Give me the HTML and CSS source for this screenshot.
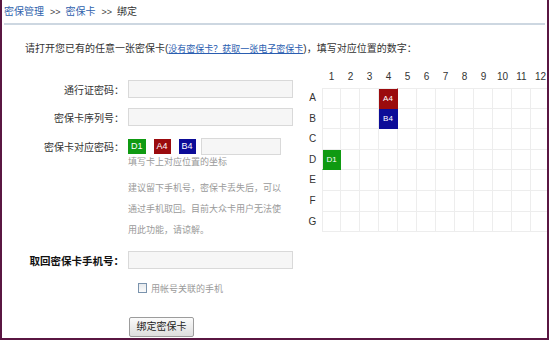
FILE: index.html
```html
<!DOCTYPE html>
<html lang="zh-CN">
<head>
<meta charset="utf-8">
<title>绑定密保卡</title>
<link rel="stylesheet" href="styles.css">
</head>
<body>
<div class="frame">
  <div class="crumb"><a class="lnk">密保管理</a><span class="sep">&gt;&gt;</span><a class="lnk">密保卡</a><span class="sep">&gt;&gt;</span><span class="cur">绑定</span></div>
  <p class="intro">请打开您已有的任意一张密保卡(<a class="sublink">没有密保卡？获取一张电子密保卡</a>)，填写对应位置的数字：</p>
  <div class="content">
    <div class="form">
      <div class="row r1"><span class="lbl">通行证密码：</span><span class="field"></span></div>
      <div class="row r2"><span class="lbl">密保卡序列号：</span><span class="field"></span></div>
      <div class="row r3"><span class="lbl">密保卡对应密码：</span><span class="tok g">D1</span><span class="tok r">A4</span><span class="tok b">B4</span><span class="field short"></span></div>
      <p class="hint">填写卡上对应位置的坐标</p>
      <p class="advice">建议留下手机号，密保卡丢失后，可以<br>通过手机取回。目前大众卡用户无法使<br>用此功能，请谅解。</p>
      <div class="row r4"><span class="lbl strong">取回密保卡手机号：</span><span class="field"></span></div>
      <div class="check"><span class="box"></span><span class="check-text">用帐号关联的手机</span></div>
      <div class="actions"><span class="btn">绑定密保卡</span></div>
    </div>
    <div class="card">
      <span class="hd"></span><span class="hd">1</span><span class="hd">2</span><span class="hd">3</span><span class="hd">4</span><span class="hd">5</span><span class="hd">6</span><span class="hd">7</span><span class="hd">8</span><span class="hd">9</span><span class="hd">10</span><span class="hd">11</span><span class="hd">12</span>
      <span class="rl">A</span><span class="c"></span><span class="c"></span><span class="c"></span><span class="c r">A4</span><span class="c"></span><span class="c"></span><span class="c"></span><span class="c"></span><span class="c"></span><span class="c"></span><span class="c"></span><span class="c"></span>
      <span class="rl">B</span><span class="c"></span><span class="c"></span><span class="c"></span><span class="c b">B4</span><span class="c"></span><span class="c"></span><span class="c"></span><span class="c"></span><span class="c"></span><span class="c"></span><span class="c"></span><span class="c"></span>
      <span class="rl">C</span><span class="c"></span><span class="c"></span><span class="c"></span><span class="c"></span><span class="c"></span><span class="c"></span><span class="c"></span><span class="c"></span><span class="c"></span><span class="c"></span><span class="c"></span><span class="c"></span>
      <span class="rl">D</span><span class="c g">D1</span><span class="c"></span><span class="c"></span><span class="c"></span><span class="c"></span><span class="c"></span><span class="c"></span><span class="c"></span><span class="c"></span><span class="c"></span><span class="c"></span><span class="c"></span>
      <span class="rl">E</span><span class="c"></span><span class="c"></span><span class="c"></span><span class="c"></span><span class="c"></span><span class="c"></span><span class="c"></span><span class="c"></span><span class="c"></span><span class="c"></span><span class="c"></span><span class="c"></span>
      <span class="rl">F</span><span class="c"></span><span class="c"></span><span class="c"></span><span class="c"></span><span class="c"></span><span class="c"></span><span class="c"></span><span class="c"></span><span class="c"></span><span class="c"></span><span class="c"></span><span class="c"></span>
      <span class="rl">G</span><span class="c"></span><span class="c"></span><span class="c"></span><span class="c"></span><span class="c"></span><span class="c"></span><span class="c"></span><span class="c"></span><span class="c"></span><span class="c"></span><span class="c"></span><span class="c"></span>
    </div>
  </div>
</div>
</body>
</html>
```

FILE: styles.css
```css
* { box-sizing: border-box; }
html, body { margin: 0; padding: 0; background: #fff; }
body {
  font-family: "Liberation Sans", "Noto Sans CJK SC", sans-serif;
  font-size: 10px;
  color: #333;
}
.frame {
  width: 549px;
  height: 340px;
  border-left: 2px solid #5a1642;
  border-right: 2px solid #5a1642;
  border-bottom: 2px solid #5a1642;
  overflow: hidden;
  display: flex;
  flex-direction: column;
}
.crumb {
  height: 25px;
  line-height: 23px;
  margin: 0 2px 0 2px;
  border-bottom: 2px solid #cdd7e1;
  white-space: nowrap;
}
.lnk { color: #2f62ad; }
.sep { margin: 0 5px 0 6px; color: #444; font-size: 9px; }
.cur { color: #333; }
.intro {
  margin: 17px 0 0;
  padding-left: 23px;
  line-height: 14px;
  white-space: nowrap;
}
.sublink {
  color: #2a5db0;
  text-decoration: underline;
  font-size: 9px;
}
.content { display: flex; flex: 1; }
.form { width: 303px; flex: none; padding-top: 24px; }
.row { display: flex; align-items: center; }
.lbl {
  width: 122px;
  margin-right: 4px;
  text-align: right;
  flex: none;
  color: #333;
}
.lbl.strong { color: #111; font-weight: bold; font-size: 10.5px; }
.field {
  display: block;
  width: 165px;
  height: 18px;
  background: #f6f6f6;
  border: 1px solid #d9d9d9;
}
.field.short { width: 80px; height: 17px; margin-left: 0; }
.r2 { margin-top: 10px; }
.r3 { margin-top: 12px; }
.tok {
  display: block;
  height: 15px;
  line-height: 15px;
  padding: 0 3px;
  color: #fff;
  font-size: 9px;
  margin-right: 8px;
}
.tok.b { margin-right: 5px; }
.g { background: #0f9a12; }
.r { background: #9b0b0e; }
.b { background: #0c0c98; }
.hint {
  margin: 1px 0 0;
  padding-left: 126px;
  line-height: 12px;
  font-size: 9px;
  color: #999;
}
.advice {
  margin: 10px 0 0;
  padding-left: 126px;
  line-height: 21px;
  font-size: 9px;
  color: #9a9a9a;
  white-space: nowrap;
}
.r4 { margin-top: 10px; }
.check {
  margin-top: 12px;
  padding-left: 136px;
  height: 14px;
  display: flex;
  align-items: center;
  gap: 4px;
}
.box {
  width: 9px;
  height: 10px;
  border: 1px solid #7a93ad;
  background: linear-gradient(#e6e9ec, #fbfbfb);
}
.check-text { font-size: 9px; color: #9a9a9a; }
.actions { margin-top: 22px; padding-left: 127px; }
.btn {
  display: inline-block;
  width: 65px;
  height: 20px;
  line-height: 18px;
  text-align: center;
  border: 1px solid #9c9c9c;
  border-radius: 2px;
  background: linear-gradient(#fbfbfb, #dedede);
  color: #222;
  font-size: 10px;
}
.card {
  padding-top: 11px;
  display: grid;
  grid-template-columns: 17px repeat(12, 19px);
  grid-template-rows: 21px repeat(7, 20.6px);
  align-content: start;
}
.hd {
  text-align: center;
  line-height: 20px;
  color: #333;
  font-size: 10px;
}
.rl {
  text-align: center;
  line-height: 20px;
  font-size: 10px;
  color: #333;
  padding-right: 2px;
}
.c {
  border-right: 1px solid #ededed;
  border-bottom: 1px solid #ededed;
  color: #fff;
  font-size: 8px;
  display: flex;
  align-items: center;
  justify-content: center;
}
.card .c:nth-child(13n+2) { border-left: 1px solid #ededed; }
.card .c:nth-child(-n+26) { border-top: 1px solid #ededed; }
.c.r { border-color: #9b0b0e; }
.c.b { border-color: #0c0c98; }
.c.g { border-color: #0f9a12; }
```
